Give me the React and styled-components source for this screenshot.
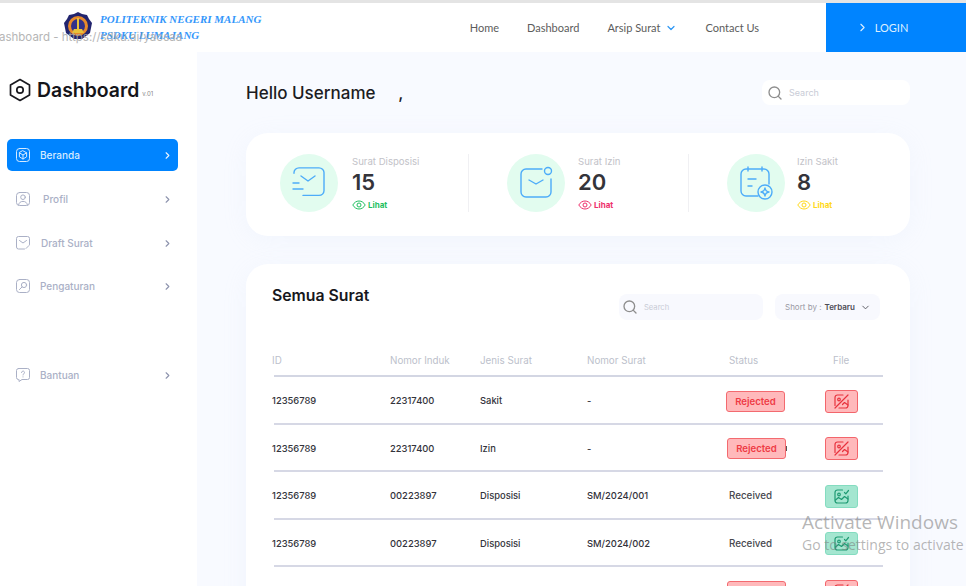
import styled, { createGlobalStyle } from "styled-components";
import { ChevronRight, ChevronDown, Search } from "lucide-react";

const BLUE = "#0084ff";
const FONT = `Inter, "Open Sans", sans-serif`;

const GlobalStyle = createGlobalStyle`
  html, body { margin: 0; padding: 0; height: 100%; overflow: hidden; background: #fff; }
  * { box-sizing: border-box; }
  body { font-family: ${FONT}; }
`;

const Page = styled.div`
  position: relative;
  display: flex;
  flex-direction: column;
  height: 100vh;
  overflow: hidden;
  border-top: 3px solid #e4e4e4;
`;

const Header = styled.header`
  position: relative;
  display: flex;
  align-items: stretch;
  flex: 0 0 49px;
  background: #fff;
`;

const Brand = styled.div`
  display: flex;
  align-items: center;
  gap: 7px;
  padding: 0 0 0 63px;
  margin-top: -3px;
`;

const BrandText = styled.div`
  font-family: "Liberation Serif", serif;
  font-style: italic;
  font-weight: 700;
  font-size: 11px;
  line-height: 16px;
  color: #3497fb;
  white-space: nowrap;
  margin-top: 2px;
`;

const UrlGhost = styled.div`
  position: absolute;
  left: -1px;
  top: 27px;
  font-size: 11.5px;
  color: #a9a9a9;
  white-space: nowrap;
  opacity: 0.85;
`;

const Nav = styled.nav`
  display: flex;
  align-items: center;
  gap: 28px;
  margin-left: auto;
  margin-right: 67px;
  font-family: Lato, sans-serif;
  font-size: 11px;
  color: #5c5c5c;
`;

const NavLink = styled.a`
  display: flex;
  align-items: center;
  gap: 5px;
  white-space: nowrap;
`;

const LoginButton = styled.button`
  display: flex;
  align-items: center;
  justify-content: center;
  gap: 6px;
  width: 140px;
  border: 0;
  padding: 0 28px 0 0;
  background: ${BLUE};
  color: #dcefff;
  font-family: Lato, sans-serif;
  font-size: 11px;
`;

const Body = styled.div`
  display: flex;
  flex: 1;
  min-height: 0;
`;

const Sidebar = styled.aside`
  flex: 0 0 197px;
  background: #fff;
  padding: 26px 19px 0 7px;
`;

const Logo = styled.div`
  display: flex;
  align-items: center;
  gap: 6px;
  padding-left: 2px;
  height: 24px;
  margin-bottom: 37px;
  font-size: 19.4px;
  font-weight: 600;
  color: #15151a;
`;

const Version = styled.span`
  font-size: 6px;
  font-weight: 400;
  color: #888;
  margin: 7px 0 0 -3px;
`;

const MenuItem = styled.div`
  display: flex;
  align-items: center;
  height: 32px;
  padding: 0 5px 0 8px;
  margin-top: ${(p) => p.$top}px;
  border-radius: 5px;
  background: ${(p) => (p.$active ? BLUE : "transparent")};
  color: ${(p) => (p.$active ? "#d6ebff" : "#aab0c6")};
  font-size: 10px;
  font-weight: 500;
  svg.chev { margin-left: auto; color: ${(p) => (p.$active ? "#eaf5ff" : "#8d93ad")}; }
`;

const MenuLabel = styled.span`
  margin-left: ${(p) => p.$left || 9}px;
`;

const Main = styled.main`
  flex: 1;
  min-width: 0;
  padding: 28px 56px 0 49px;
  background: #f8faff;
`;

const TopRow = styled.div`
  display: flex;
  align-items: center;
  justify-content: space-between;
  height: 25px;
  margin-bottom: 28px;
`;

const Hello = styled.h1`
  margin: 0;
  font-size: 17px;
  font-weight: 500;
  color: #1c1c22;
  white-space: pre;
`;

const SearchBox = styled.div`
  display: flex;
  align-items: center;
  gap: 6px;
  width: ${(p) => p.$width}px;
  height: ${(p) => p.$height}px;
  padding-left: ${(p) => p.$pad}px;
  border-radius: 8px;
  background: ${(p) => p.$bg};
  font-size: ${(p) => p.$size}px;
  color: #c9ccd6;
  svg { color: #8e8e8e; }
`;

const Card = styled.section`
  background: #fff;
  border-radius: 22px;
  box-shadow: 0 4px 24px rgba(200, 210, 240, 0.12);
`;

const StatsCard = styled(Card)`
  display: flex;
  height: 103px;
  padding: 21px 0 0 34px;
  margin-bottom: 28px;
`;

const Stat = styled.div`
  display: flex;
  gap: ${(p) => p.$gap}px;
  width: ${(p) => p.$width}px;
  height: 58px;
  padding-left: ${(p) => p.$pad || 0}px;
  border-right: ${(p) => (p.$divider ? "1px solid #f0f0f3" : "0")};
`;

const StatCircle = styled.div`
  display: flex;
  align-items: center;
  justify-content: center;
  flex: 0 0 58px;
  height: 58px;
  border-radius: 50%;
  background: #e2fcef;
`;

const StatText = styled.div`
  display: flex;
  flex-direction: column;
  padding-top: 1px;
`;

const StatLabel = styled.span`
  font-size: 9.6px;
  line-height: 14px;
  color: #c2c2c8;
  white-space: nowrap;
`;

const StatValue = styled.span`
  font-size: 22px;
  line-height: 27px;
  font-weight: 600;
  color: #34343a;
`;

const StatLink = styled.span`
  display: flex;
  align-items: center;
  gap: 2px;
  font-size: 8px;
  line-height: 12px;
  margin-top: 3px;
  font-weight: 700;
  color: ${(p) => p.$color};
`;

const TableCard = styled(Card)`
  padding: 21px 27px 0 26px;
  height: 400px;
`;

const TableTop = styled.div`
  display: flex;
  align-items: flex-start;
  height: 35px;
`;

const TableTitle = styled.h2`
  margin: 1px 0 0;
  font-size: 15.8px;
  line-height: 20px;
  font-weight: 600;
  color: #17171c;
`;

const Controls = styled.div`
  display: flex;
  gap: 12px;
  margin: 9px 3px 0 auto;
`;

const SortBox = styled.div`
  display: flex;
  align-items: center;
  gap: 1px;
  width: 105px;
  height: 26px;
  padding-left: 10px;
  border-radius: 8px;
  background: #f8f9fe;
  font-size: 8px;
  color: #9a9aa4;
  white-space: nowrap;
  b { color: #4c4c55; font-weight: 600; margin-left: 2px; }
  svg { margin-left: 4px; color: #55555e; }
`;

const Columns = "118px 90px 107px 139px 99px 58px";

const HeadRow = styled.div`
  display: grid;
  grid-template-columns: ${Columns};
  align-items: center;
  height: 31px;
  margin-top: 26px;
  padding-bottom: 2px;
  font-size: 9.8px;
  color: #bcbfcb;
  background: linear-gradient(#d3d6e3, #d3d6e3) no-repeat 2px 100% / calc(100% - 2px) 2px;
`;

const Row = styled.div`
  display: grid;
  grid-template-columns: ${Columns};
  align-items: center;
  height: 47.5px;
  font-size: 9.4px;
  font-weight: 500;
  color: #33333b;
  background: linear-gradient(#d6d8e5, #d6d8e5) no-repeat 2px 100% / calc(100% - 2px) 2px;
`;

const HeadFile = styled.span`
  padding-left: 8px;
`;

const HeadStatus = styled.span`
  padding-left: 3px;
`;

const Received = styled.span`
  padding-left: 3px;
  font-size: 9.8px;
  color: #47474e;
`;

const RejectedBadge = styled.span`
  position: relative;
  display: flex;
  align-items: center;
  justify-content: center;
  width: 59px;
  height: 21px;
  margin: 1px 0 0 ${(p) => (p.$shift ? 1 : 0)}px;
  border: 1px solid #f36a6f;
  border-radius: 3px;
  background: #ffb9bb;
  color: #ee3b45;
  font-size: 9.6px;
  font-weight: 600;
`;

const StrayMark = styled.i`
  position: absolute;
  right: -2px;
  top: 7px;
  width: 1px;
  height: 5px;
  background: #555;
`;

const FileButton = styled.span`
  display: flex;
  align-items: center;
  justify-content: center;
  width: 33px;
  height: 23px;
  margin-top: 1px;
  border: 1px solid ${(p) => (p.$ok ? "#84dcc0" : "#f3656b")};
  border-radius: 3px;
  background: ${(p) => (p.$ok ? "#a4e6d0" : "#ffb9bb")};
  color: ${(p) => (p.$ok ? "#1f9a73" : "#e8323d")};
`;

const ActivateNote = styled.div`
  position: absolute;
  left: 802px;
  top: 506px;
  font-family: "Open Sans", sans-serif;
  color: rgba(120, 120, 120, 0.55);
  white-space: nowrap;
`;

const ActivateTitle = styled.div`
  font-size: 19px;
  line-height: 26px;
`;

const ActivateSub = styled.div`
  font-size: 14px;
  line-height: 20px;
`;

const CrestIcon = () => (
  <svg width="30" height="30" viewBox="0 0 30 30">
    <path d="M15 1l4 2 5 1 2 4 3 4-1 5-1 5-4 3-4 3h-8l-4-3-4-3-1-5-1-5 3-4 2-4 5-1z" fill="#22246e" />
    <circle cx="15" cy="15" r="10" fill="#e88a2a" />
    <circle cx="15" cy="15" r="7" fill="#31318a" />
    <path d="M14 7h2v11h3l2 4H9l2-4h3z" fill="#e8c23a" />
  </svg>
);

const HexIcon = () => (
  <svg width="22" height="24" viewBox="0 0 22 24" fill="none" stroke="#1a1a20" strokeWidth="1.7">
    <path d="M11 1.5l9.5 5.4v10.2L11 22.5 1.5 17.1V6.9z" strokeLinejoin="round" />
    <circle cx="11" cy="12" r="3.2" />
  </svg>
);

const MenuIcon = ({ kind }) => (
  <svg width="16" height="16" viewBox="0 0 16 16" fill="none" stroke="currentColor" strokeWidth="1" strokeLinecap="round" strokeLinejoin="round">
    {kind === "bantuan" ? (
      <>
        <path d="M3.5 1.5h9a2 2 0 0 1 2 2v7a2 2 0 0 1-2 2H7l-3 2v-2h-.5a2 2 0 0 1-2-2v-7a2 2 0 0 1 2-2z" />
        <path d="M6.5 5.5a1.5 1.5 0 1 1 2.3 1.3c-.5.3-.8.6-.8 1.2M8 9.8v.2" />
      </>
    ) : kind === "draft" ? (
      <>
        <path d="M9.5 14H3.5a2 2 0 0 1-2-2V3.5a2 2 0 0 1 2-2h9a2 2 0 0 1 2 2v6" />
        <path d="M4.5 5.5L8 8l3.5-2.5M11 13.5l3-3" />
      </>
    ) : (
      <>
        <rect x="1.5" y="1.5" width="13" height="13" rx="3" />
        {kind === "home" && (
          <>
            <path d="M8 3.8l3.6 2v4L8 12l-3.6-2.2v-4z" />
            <path d="M4.4 5.8L8 8l3.6-2.2M8 8v4" />
          </>
        )}
        {kind === "user" && (
          <>
            <circle cx="8" cy="6.2" r="2.3" />
            <path d="M3.6 14c.4-2.6 2.2-3.6 4.4-3.6s4 1 4.4 3.6" />
          </>
        )}
        {kind === "gear" && (
          <>
            <circle cx="9" cy="7" r="2.6" />
            <path d="M7 9l-2.6 2.6" />
          </>
        )}
      </>
    )}
  </svg>
);

const EyeIcon = ({ color }) => (
  <svg width="14" height="10" viewBox="0 0 14 10" fill="none" stroke={color} strokeWidth="1">
    <path d="M.8 5C2.3 2.4 4.5 1 7 1s4.7 1.4 6.2 4C11.7 7.6 9.5 9 7 9S2.3 7.6.8 5z" />
    <circle cx="7" cy="5" r="2" />
  </svg>
);

const StatIcon = ({ kind }) => (
  <svg width="36" height="36" viewBox="0 0 36 36" fill="none" stroke="#4dacf9" strokeWidth="1.4" strokeLinecap="round" strokeLinejoin="round">
    {kind === "send" && (
      <>
        <path d="M3 8V7a5 5 0 0 1 5-5h20a5 5 0 0 1 5 5v20a5 5 0 0 1-5 5H12" transform="translate(0 1) scale(1 .92)" />
        <path d="M10 11l7 5 7-5M2 18h6M2 24h10" />
      </>
    )}
    {kind === "mail" && (
      <>
        <path d="M24 4H8a5 5 0 0 0-5 5v18a5 5 0 0 0 5 5h20a5 5 0 0 0 5-5V14" />
        <circle cx="30" cy="6" r="3.5" />
        <path d="M11 15l7 4 7-4" />
      </>
    )}
    {kind === "calendar" && (
      <>
        <path d="M20 31H8a5 5 0 0 1-5-5V9a5 5 0 0 1 5-5h18a5 5 0 0 1 5 5v10" />
        <path d="M10 2v4M24 2v4M10 14h8M10 21h4" />
        <circle cx="27" cy="27" r="7" />
        <path d="M27 23c.4 2.6 1.4 3.6 4 4-2.600.4-3.600 1.400-4 4-.4-2.600-1.400-3.600-4-4 2.600-.4 3.600-1.400 4-4z" />
      </>
    )}
  </svg>
);

const FileIcon = ({ ok }) => (
  <svg width="17" height="17" viewBox="0 0 17 17" fill="none" stroke="currentColor" strokeWidth="1.2" strokeLinecap="round" strokeLinejoin="round">
    {ok ? (
      <>
        <path d="M9.5 2H4.5A2.5 2.5 0 0 0 2 4.5v8A2.5 2.5 0 0 0 4.5 15h8a2.5 2.5 0 0 0 2.5-2.500V8" />
        <circle cx="6" cy="6.5" r="1.3" />
        <path d="M2.500 12l3-2.500 3 2 3-3 3.500 2.500M11.500 4.500l1.300 1.300L15.500 2.500" />
      </>
    ) : (
      <>
        <path d="M10 2H4.500A2.500 2.500 0 0 0 2 4.500v8" />
        <path d="M15 7v5.500a2.500 2.500 0 0 1-2.500 2.500H6" />
        <circle cx="6" cy="6.500" r="1.300" />
        <path d="M2 15L15 2M9.500 11.500l2-2 3.500 2.500" />
      </>
    )}
  </svg>
);

const menu = [
  { label: "Beranda", icon: "home", top: 0, active: true },
  { label: "Profil", icon: "user", top: 12, left: 12 },
  { label: "Draft Surat", icon: "draft", top: 12, left: 10 },
  { label: "Pengaturan", icon: "gear", top: 11 },
  { label: "Bantuan", icon: "bantuan", top: 57 },
];

const stats = [
  { label: "Surat Disposisi", value: 15, icon: "send", color: "#1fbf5f", width: 189, gap: 14, divider: true },
  { label: "Surat Izin", value: 20, icon: "mail", color: "#ee2f6b", width: 220, gap: 13, pad: 38, divider: true },
  { label: "Izin Sakit", value: 8, icon: "calendar", color: "#ffd91a", width: 210, gap: 12, pad: 38 },
];

const rows = [
  { id: "12356789", induk: "22317400", jenis: "Sakit", nomor: "-", status: "Rejected" },
  { id: "12356789", induk: "22317400", jenis: "Izin", nomor: "-", status: "Rejected", shift: true, stray: true },
  { id: "12356789", induk: "00223897", jenis: "Disposisi", nomor: "SM/2024/001", status: "Received", ok: true },
  { id: "12356789", induk: "00223897", jenis: "Disposisi", nomor: "SM/2024/002", status: "Received", ok: true },
  // only the tops of the badge and button are in view on this row
  { status: "", shift: true },
];

export default function App() {
  return (
    <Page>
      <GlobalStyle />
      <Header>
        <UrlGhost>ashboard - https://sdku.ai/yaosaa</UrlGhost>
        <Brand>
          <CrestIcon />
          <BrandText>
            POLITEKNIK NEGERI MALANG
            <br />
            PSDKU LUMAJANG
          </BrandText>
        </Brand>
        <Nav>
          <NavLink>Home</NavLink>
          <NavLink>Dashboard</NavLink>
          <NavLink>
            Arsip Surat <ChevronDown size={12} strokeWidth={2.4} color="#2c97f5" />
          </NavLink>
          <NavLink>Contact Us</NavLink>
        </Nav>
        <LoginButton>
          <ChevronRight size={13} /> LOGIN
        </LoginButton>
      </Header>
      <Body>
        <Sidebar>
          <Logo>
            <HexIcon />
            Dashboard <Version>v.01</Version>
          </Logo>
          {menu.map((m) => (
            <MenuItem key={m.label} $active={m.active} $top={m.top}>
              <MenuIcon kind={m.icon} />
              <MenuLabel $left={m.left}>{m.label}</MenuLabel>
              <ChevronRight className="chev" size={11} strokeWidth={2.4} />
            </MenuItem>
          ))}
        </Sidebar>
        <Main>
          <TopRow>
            <Hello>Hello Username     ,</Hello>
            <SearchBox $width={148} $height={25} $pad={5} $bg="#fff" $size={9}>
              <Search size={16} />
              Search
            </SearchBox>
          </TopRow>
          <StatsCard>
            {stats.map((s) => (
              <Stat key={s.label} $width={s.width} $gap={s.gap} $pad={s.pad} $divider={s.divider}>
                <StatCircle>
                  <StatIcon kind={s.icon} />
                </StatCircle>
                <StatText>
                  <StatLabel>{s.label}</StatLabel>
                  <StatValue>{s.value}</StatValue>
                  <StatLink $color={s.color}>
                    <EyeIcon color={s.color} /> Lihat
                  </StatLink>
                </StatText>
              </Stat>
            ))}
          </StatsCard>
          <TableCard>
            <TableTop>
              <TableTitle>Semua Surat</TableTitle>
              <Controls>
                <SearchBox $width={144} $height={26} $pad={3} $bg="#f8f9fe" $size={7.6}>
                  <Search size={16} />
                  Search
                </SearchBox>
                <SortBox>
                  Short by : <b>Terbaru</b>
                  <ChevronDown size={11} />
                </SortBox>
              </Controls>
            </TableTop>
            <HeadRow>
              <span>ID</span>
              <span>Nomor Induk</span>
              <span>Jenis Surat</span>
              <span>Nomor Surat</span>
              <HeadStatus>Status</HeadStatus>
              <HeadFile>File</HeadFile>
            </HeadRow>
            {rows.map((r, i) => (
              <Row key={i}>
                <span>{r.id}</span>
                <span>{r.induk}</span>
                <span>{r.jenis}</span>
                <span>{r.nomor}</span>
                {r.ok ? (
                  <Received>{r.status}</Received>
                ) : (
                  <RejectedBadge $shift={r.shift}>
                    {r.status}
                    {r.stray && <StrayMark />}
                  </RejectedBadge>
                )}
                <FileButton $ok={r.ok}>
                  <FileIcon ok={r.ok} />
                </FileButton>
              </Row>
            ))}
          </TableCard>
        </Main>
      </Body>
      <ActivateNote>
        <ActivateTitle>Activate Windows</ActivateTitle>
        <ActivateSub>Go to settings to activate Windows.</ActivateSub>
      </ActivateNote>
    </Page>
  );
}
